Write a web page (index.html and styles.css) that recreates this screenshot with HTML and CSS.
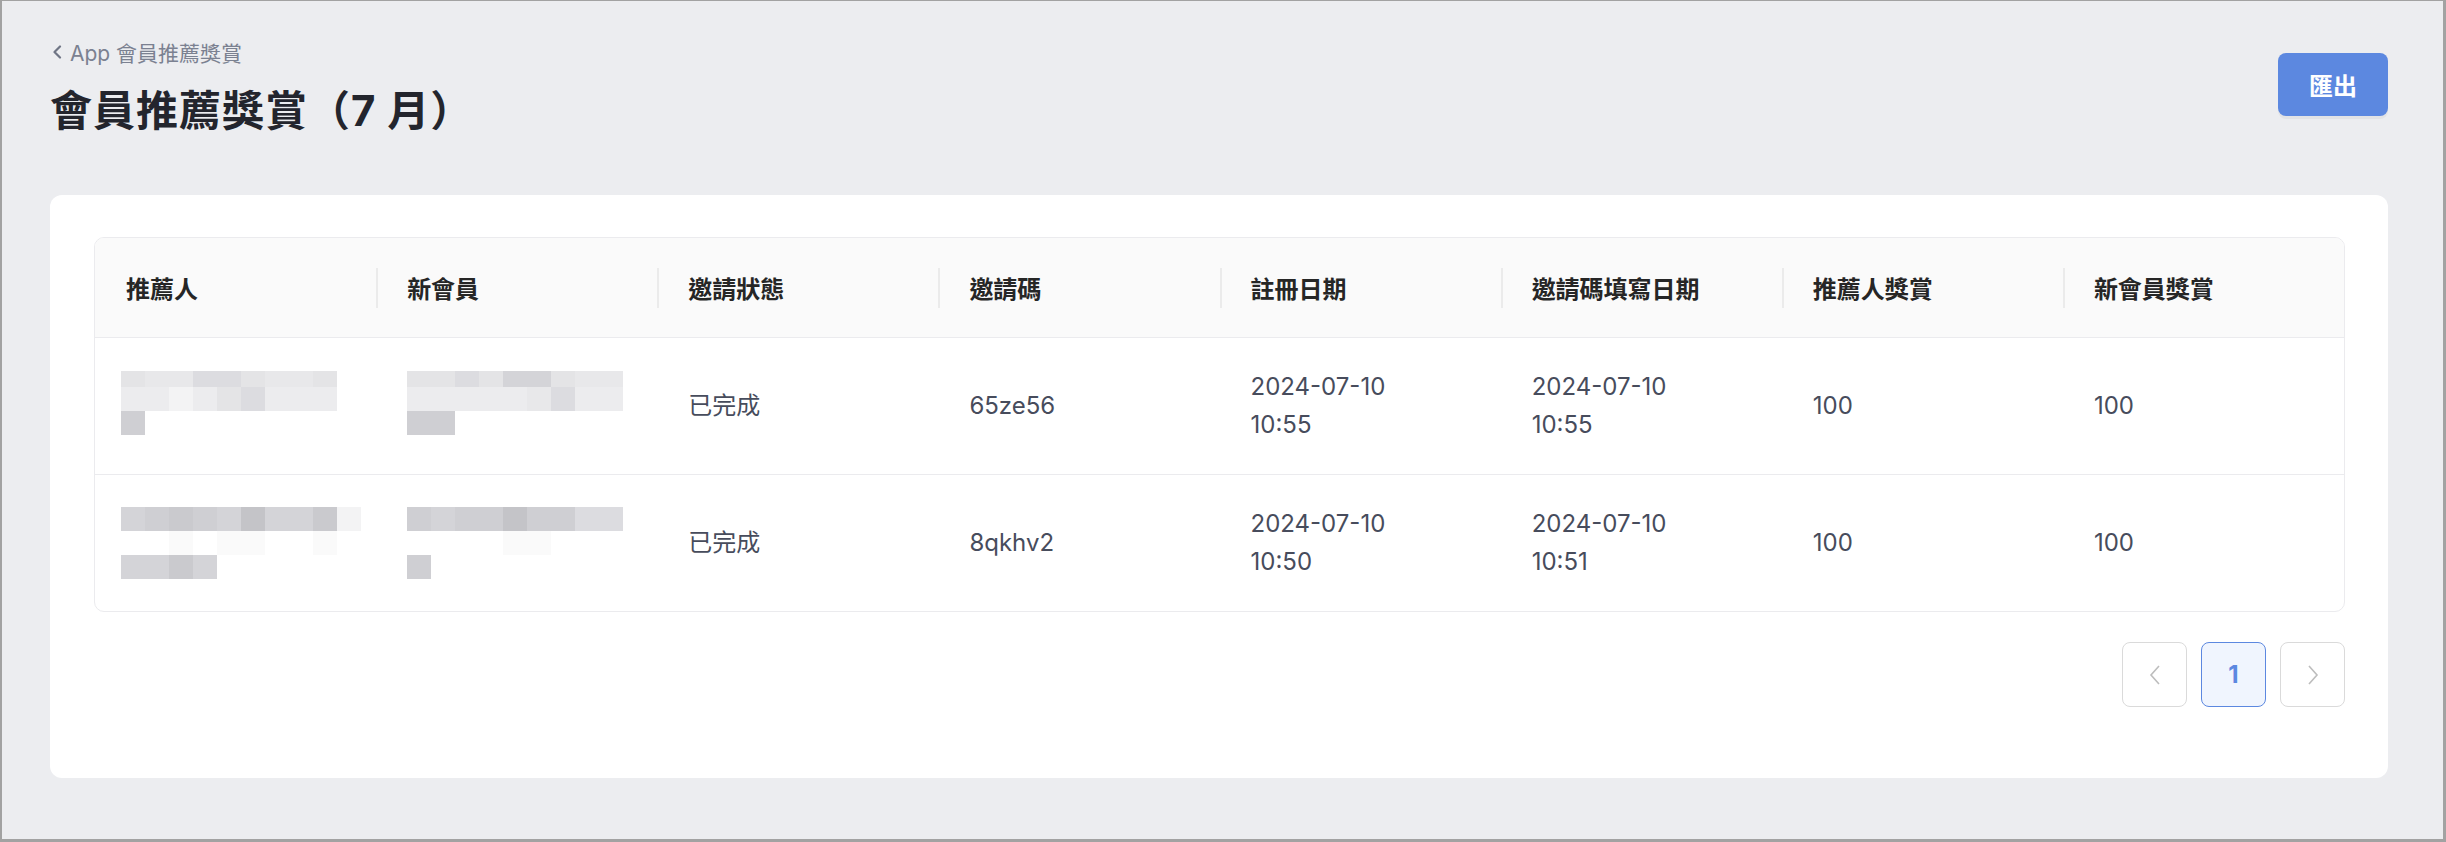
FILE: index.html
```html
<!DOCTYPE html>
<html lang="zh-Hant">
  <head>
    <meta charset="utf-8">
    <title>會員推薦獎賞（7 月）</title>
    <link rel="stylesheet" href="styles.css">
  </head>
  <body>
    <div class="frame">
      <div class="page-head">
        <div>
          <a class="crumb" href="#">
            <svg class="crumb-icon" width="10" height="14" viewBox="0 0 10 14"><path d="M8 1.5 L2.5 7 L8 12.5" fill="none" stroke="#6f7585" stroke-width="2.2" stroke-linecap="round" stroke-linejoin="round"/></svg>
            App 會員推薦獎賞
          </a>
          <h1>會員推薦獎賞（7 月）</h1>
        </div>
        <button class="btn-export">匯出</button>
      </div>

      <div class="card">
        <div class="table-wrap">
          <table>
            <thead>
              <tr>
                <th>推薦人</th>
                <th>新會員</th>
                <th>邀請狀態</th>
                <th>邀請碼</th>
                <th>註冊日期</th>
                <th>邀請碼填寫日期</th>
                <th>推薦人獎賞</th>
                <th>新會員獎賞</th>
              </tr>
            </thead>
            <tbody>
              <tr>
                <td>
                  <div class="mosaic short-top">
                    <i class="d"></i><i class="c"></i><i class="c"></i><i class="e"></i><i class="e"></i><i class="d"></i><i class="c"></i><i class="c"></i><i class="d"></i>
                    <i class="b"></i><i class="b"></i><i class="a"></i><i class="b"></i><i class="d"></i><i class="e"></i><i class="b"></i><i class="b"></i><i class="b"></i>
                    <i class="g"></i>
                  </div>
                </td>
                <td>
                  <div class="mosaic short-top flush">
                    <i class="d"></i><i class="d"></i><i class="e"></i><i class="d"></i><i class="f"></i><i class="f"></i><i class="d"></i><i class="c"></i><i class="c"></i>
                    <i class="b"></i><i class="b"></i><i class="b"></i><i class="b"></i><i class="b"></i><i class="c"></i><i class="e"></i><i class="b"></i><i class="b"></i>
                    <i class="g"></i><i class="g"></i>
                  </div>
                </td>
                <td>已完成</td>
                <td>65ze56</td>
                <td>2024-07-10<br>10:55</td>
                <td>2024-07-10<br>10:55</td>
                <td>100</td>
                <td>100</td>
              </tr>
              <tr>
                <td>
                  <div class="mosaic wide">
                    <i class="f"></i><i class="g"></i><i class="h"></i><i class="g"></i><i class="f"></i><i class="i"></i><i class="f"></i><i class="f"></i><i class="h"></i><i class="a"></i>
                    <i></i><i></i><i class="w"></i><i></i><i class="w"></i><i class="w"></i><i></i><i></i><i class="w"></i><i></i>
                    <i class="f"></i><i class="f"></i><i class="h"></i><i class="f"></i>
                  </div>
                </td>
                <td>
                  <div class="mosaic flush">
                    <i class="g"></i><i class="f"></i><i class="g"></i><i class="g"></i><i class="i"></i><i class="g"></i><i class="g"></i><i class="e"></i><i class="e"></i>
                    <i></i><i></i><i></i><i></i><i class="w"></i><i class="w"></i><i></i><i></i><i></i>
                    <i class="g"></i>
                  </div>
                </td>
                <td>已完成</td>
                <td>8qkhv2</td>
                <td>2024-07-10<br>10:50</td>
                <td>2024-07-10<br>10:51</td>
                <td>100</td>
                <td>100</td>
              </tr>
            </tbody>
          </table>
        </div>

        <div class="pager">
          <button class="page-btn">
            <svg width="14" height="22" viewBox="0 0 14 22"><path d="M11 2 L3 11 L11 20" fill="none" stroke="#bdbdbd" stroke-width="1.6"/></svg>
          </button>
          <button class="page-btn active">1</button>
          <button class="page-btn">
            <svg width="14" height="22" viewBox="0 0 14 22"><path d="M3 2 L11 11 L3 20" fill="none" stroke="#bdbdbd" stroke-width="1.6"/></svg>
          </button>
        </div>
      </div>
    </div>
  </body>
</html>
```

FILE: styles.css
```css
* {
  box-sizing: border-box;
}
body {
  margin: 0;
  font-family: Inter, "Noto Sans CJK TC", sans-serif;
}
.frame {
  height: 842px;
  background-color: #ecedf0;
  border: 2px solid #a2a2a2;
  border-top-width: 1px;
  border-right-width: 3px;
  border-bottom-width: 3px;
  padding: 35px 55px 0 48px;
}
.page-head {
  display: flex;
  justify-content: space-between;
  align-items: flex-start;
  height: 159px;
}
.crumb {
  display: flex;
  align-items: center;
  gap: 8px;
  height: 32px;
  font-size: 21px;
  color: #7b8191;
  text-decoration: none;
}
.crumb-icon {
  margin-left: 2px;
}
h1 {
  margin: 14px 0 0 0;
  font-size: 42px;
  line-height: 58px;
  font-weight: 700;
  letter-spacing: 1px;
  color: #23252d;
}
.btn-export {
  margin-top: 17px;
  width: 110px;
  height: 63px;
  border: none;
  border-radius: 8px;
  background-color: #5c88e0;
  color: white;
  font-family: inherit;
  font-size: 24px;
  font-weight: 700;
  box-shadow: 0 3px 0 rgba(0, 0, 0, 0.04);
}
.card {
  background-color: white;
  border-radius: 12px;
  padding: 42px 43px 71px 44px;
}
.table-wrap {
  border: 1px solid #ebebee;
  border-radius: 10px;
  overflow: hidden;
}
table {
  width: 100%;
  border-collapse: collapse;
  table-layout: fixed;
}
th {
  position: relative;
  height: 99px;
  padding: 0 31px;
  background-color: #fafafa;
  border-bottom: 1px solid #ebebee;
  text-align: left;
  font-size: 24px;
  font-weight: 700;
  color: #262626;
}
th + th::before {
  content: "";
  position: absolute;
  left: 0;
  top: 30px;
  height: 40px;
  width: 2px;
  background-color: #ebebeb;
}
td {
  height: 137px;
  padding: 0 31px;
  font-size: 24px;
  line-height: 38px;
  color: #474c5c;
  vertical-align: middle;
}
tbody tr + tr td {
  border-top: 1px solid #ebebee;
}
.mosaic {
  display: grid;
  grid-template-columns: repeat(9, 24px);
  grid-auto-rows: 24px;
  margin-left: -5px;
}
.mosaic.short-top {
  grid-template-rows: 16px 24px 24px;
  margin-top: -6px;
}
.mosaic.wide {
  grid-template-columns: repeat(10, 24px);
}
.mosaic.flush {
  margin-left: 0;
}
.mosaic .w { background-color: #fafafa; }
.mosaic .a { background-color: #f3f3f4; }
.mosaic .b { background-color: #ececee; }
.mosaic .c { background-color: #e8e8ea; }
.mosaic .d { background-color: #e4e4e6; }
.mosaic .e { background-color: #dcdce0; }
.mosaic .f { background-color: #d4d4d8; }
.mosaic .g { background-color: #cfcfd3; }
.mosaic .h { background-color: #cacace; }
.mosaic .i { background-color: #c4c4c8; }
.pager {
  display: flex;
  justify-content: flex-end;
  gap: 14px;
  margin-top: 30px;
}
.page-btn {
  display: flex;
  align-items: center;
  justify-content: center;
  width: 65px;
  height: 65px;
  padding: 0;
  border: 1.5px solid #dadada;
  border-radius: 8px;
  background-color: white;
  font-family: inherit;
  font-size: 24px;
  font-weight: 700;
}
.page-btn.active {
  border-color: #5c88e0;
  background-color: #f0f5fe;
  color: #5c88e0;
}
```
